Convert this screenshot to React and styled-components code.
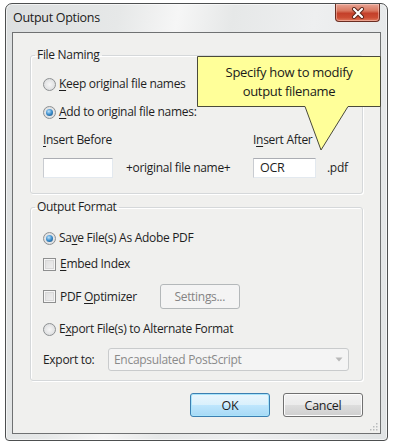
import React from 'react';
import styled, { createGlobalStyle } from 'styled-components';

const GlobalStyle = createGlobalStyle`
  html, body {
    margin: 0;
    padding: 0;
    background: #ffffff;
  }
  body {
    font-family: "Open Sans", "Noto Sans", "DejaVu Sans", sans-serif;
    font-size: 12px;
    letter-spacing: -0.3px;
    color: #1e1e1e;
  }
`;

const Window = styled.div`
  position: relative;
  box-sizing: border-box;
  margin: 3px 0 0 5px;
  width: 383px;
  height: 438px;
  border: 1px solid #4d4f50;
  border-radius: 7px 7px 4px 4px;
  padding: 0 6px 6px 6px;
  display: flex;
  flex-direction: column;
  background: linear-gradient(100deg, #dcdfe0 0%, #e6e8e8 25%, #f6f6f6 38%, #e6e8e8 50%, #eeeff0 68%, #e0e3e4 100%);
  box-shadow: inset 0 0 0 1px rgba(255, 255, 255, 0.6);
`;

const TitleBar = styled.div`
  height: 28px;
  display: flex;
  align-items: flex-start;
  justify-content: space-between;
`;

const Title = styled.span`
  padding: 5px 0 0 1px;
  font-size: 12.5px;
  color: #202020;
`;

const CloseButton = styled.div`
  width: 45px;
  height: 18px;
  margin-right: 1px;
  box-sizing: border-box;
  border: 1px solid #6a2d22;
  border-top: none;
  border-radius: 0 0 4px 4px;
  background: linear-gradient(#e8a495 0%, #d9775f 40%, #c4402a 55%, #cc4d33 80%, #e07a5e 100%);
  display: flex;
  align-items: center;
  justify-content: center;
  box-shadow: inset 0 0 0 1px rgba(255, 220, 210, 0.45);
`;

const Client = styled.div`
  position: relative;
  flex: 1;
  box-sizing: border-box;
  background: #f0f0ee;
  border: 1px solid #6f7172;
  padding: 14px 17px 0 17px;
  display: flex;
  flex-direction: column;
`;

const Group = styled.fieldset`
  min-width: 0;
  margin: ${(p) => p.$top || 0}px 0 0 0;
  padding: ${(p) => p.$pt}px 12px ${(p) => p.$pb}px 12px;
  border: 1px solid #d5d8da;
  border-radius: 3px;
  box-shadow: inset 1px 1px 0 #ffffff, 1px 1px 0 #ffffff;
  display: flex;
  flex-direction: column;
`;

const Legend = styled.legend`
  margin-left: -8px;
  padding: 0 2px;
  line-height: 16px;
  color: #1e1e1e;
`;

const Row = styled.div`
  display: flex;
  align-items: center;
  height: ${(p) => p.$h || 16}px;
  margin-top: ${(p) => p.$mt || 0}px;
  line-height: 16px;
  white-space: nowrap;
`;

const Radio = styled.span`
  box-sizing: border-box;
  width: 13px;
  height: 13px;
  margin-right: 3px;
  border-radius: 50%;
  border: 1px solid #8d9092;
  background: radial-gradient(circle at 50% 50%, #f6f6f6 0%, #e2e3e4 60%, #d2d4d5 100%);
  display: flex;
  align-items: center;
  justify-content: center;
  flex-shrink: 0;

  &::after {
    content: '';
    display: ${(p) => (p.$on ? 'block' : 'none')};
    width: 7px;
    height: 7px;
    border-radius: 50%;
    background: radial-gradient(circle at 40% 35%, #bfe3fa 0%, #3a8ccb 50%, #17466e 100%);
  }
`;

const Check = styled.span`
  box-sizing: border-box;
  width: 13px;
  height: 13px;
  margin-right: 4px;
  border: 1px solid #8e8f8f;
  background: linear-gradient(135deg, #dcdcdc 0%, #f2f2f2 100%);
  box-shadow: inset 0 0 0 1px #f6f6f6, inset 0 0 0 2px #d8d8d8;
  flex-shrink: 0;
`;

const Key = styled.u`
  text-decoration: underline;
  text-underline-offset: 2px;
`;

const FieldGrid = styled.div`
  display: grid;
  grid-template-columns: 70px 140px 63px auto;
  grid-template-rows: 16px 20px;
  row-gap: 10px;
  margin-top: 12px;
  align-items: center;
  line-height: 16px;
  white-space: nowrap;
`;

const TextBox = styled.div`
  box-sizing: border-box;
  height: 20px;
  background: #ffffff;
  border: 1px solid #e3e9ef;
  border-top-color: #abadb3;
  border-left-color: #c9ccd1;
  padding-left: 6px;
  line-height: 18px;
  font-size: 12.5px;
`;

const Caption = styled.span`
  padding-left: ${(p) => p.$pl || 0}px;
`;

const DisabledButton = styled.div`
  box-sizing: border-box;
  width: 80px;
  height: 25px;
  margin-left: 23px;
  border: 1px solid #b4b8ba;
  border-radius: 3px;
  background: #f4f4f4;
  color: #848484;
  display: flex;
  align-items: center;
  justify-content: center;
`;

const FieldLabel = styled.span`
  width: 65px;
  flex-shrink: 0;
`;

const SelectBox = styled.div`
  box-sizing: border-box;
  width: 241px;
  height: 23px;
  border: 1px solid #c9cbcc;
  border-radius: 3px;
  background: #f4f4f4;
  color: #8a8a8a;
  display: flex;
  align-items: center;
  justify-content: space-between;
  padding: 0 5px 0 5px;
`;

const Buttons = styled.div`
  display: flex;
  justify-content: flex-end;
  gap: 13px;
  margin-top: 12px;
`;

const Button = styled.div`
  box-sizing: border-box;
  width: 80px;
  height: 24px;
  border-radius: 3px;
  display: flex;
  align-items: center;
  justify-content: center;
  font-size: 12.5px;
  border: 1px solid ${(p) => (p.$default ? '#3c7fb1' : '#707070')};
  background: ${(p) =>
    p.$default
      ? 'linear-gradient(#eaf6fd 0%, #d9f0fc 50%, #bee6fd 51%, #a7d9f5 100%)'
      : 'linear-gradient(#f2f2f2 0%, #ebebeb 50%, #dddddd 51%, #cfcfcf 100%)'};
  box-shadow: inset 0 0 0 1px ${(p) => (p.$default ? '#a8e4fb' : '#fcfcfc')};
`;

const Callout = styled.div`
  position: absolute;
  left: 191px;
  top: 52px;
  width: 184px;
  height: 95px;
`;

const CalloutText = styled.div`
  position: absolute;
  left: 0;
  top: 0;
  width: 184px;
  height: 51px;
  display: flex;
  flex-direction: column;
  align-items: center;
  justify-content: center;
  font-size: 13px;
  line-height: 19px;
  color: #1a1a1a;
`;

const Grip = styled.svg`
  position: absolute;
  right: 2px;
  bottom: 2px;
`;

function CalloutShape() {
  return (
    <svg width="184" height="95" viewBox="0 0 184 95" style={{ position: 'absolute', left: 0, top: 0 }}>
      <path
        d="M0.5 0.5 H183.5 V50.5 H151 L124 94 L108 50.5 H0.5 Z"
        fill="#ffff99"
        stroke="#4a4a3a"
        strokeWidth="1"
      />
    </svg>
  );
}

export default function App() {
  return (
    <>
      <GlobalStyle />
      <Window>
        <TitleBar>
          <Title>Output Options</Title>
          <CloseButton>
            <svg width="14" height="12" viewBox="0 0 14 12">
              <path d="M3 2 L11 10 M11 2 L3 10" stroke="#5a2418" strokeWidth="4" strokeLinecap="round" />
              <path d="M3 2 L11 10 M11 2 L3 10" stroke="#ffffff" strokeWidth="2.2" strokeLinecap="round" />
            </svg>
          </CloseButton>
        </TitleBar>

        <Client>
          <Group $pt={13} $pb={15}>
            <Legend>File Naming</Legend>
            <Row>
              <Radio />
              <span><Key>K</Key>eep original file names</span>
            </Row>
            <Row $mt={12}>
              <Radio $on />
              <span><Key>A</Key>dd to original file names:</span>
            </Row>
            <FieldGrid>
              <Caption style={{ gridColumn: '1 / 3' }}><Key>I</Key>nsert Before</Caption>
              <Caption style={{ gridColumn: '3 / 5' }}>I<Key>n</Key>sert After</Caption>
              <TextBox />
              <Caption $pl={13}>+original file name+</Caption>
              <TextBox>OCR</TextBox>
              <Caption $pl={11}>.pdf</Caption>
            </FieldGrid>
          </Group>

          <Group $top={5} $pt={15} $pb={9}>
            <Legend>Output Format</Legend>
            <Row>
              <Radio $on />
              <span>Sa<Key>v</Key>e File(s) As Adobe PDF</span>
            </Row>
            <Row $mt={10}>
              <Check />
              <span><Key>E</Key>mbed Index</span>
            </Row>
            <Row $mt={12} $h={25}>
              <Check />
              <span>PDF <Key>O</Key>ptimizer</span>
              <DisabledButton>Settings...</DisabledButton>
            </Row>
            <Row $mt={12}>
              <Radio />
              <span>E<Key>x</Key>port File(s) to Alternate Format</span>
            </Row>
            <Row $mt={11} $h={23}>
              <FieldLabel>Export to:</FieldLabel>
              <SelectBox>
                <span>Encapsulated PostScript</span>
                <svg width="8" height="5" viewBox="0 0 8 5">
                  <path d="M0.5 0.5 H7.5 L4 4.5 Z" fill="#b8b8b8" />
                </svg>
              </SelectBox>
            </Row>
          </Group>

          <Buttons>
            <Button $default>OK</Button>
            <Button>Cancel</Button>
          </Buttons>

          <Grip width="10" height="10" viewBox="0 0 10 10">
            {[[8, 2], [8, 5], [8, 8], [5, 5], [5, 8], [2, 8]].map(([x, y]) => (
              <rect key={`${x}-${y}`} x={x} y={y} width="1.5" height="1.5" fill="#b9bcbd" />
            ))}
          </Grip>
        </Client>

        <Callout>
          <CalloutShape />
          <CalloutText>
            <span>Specify how to modify</span>
            <span>output filename</span>
          </CalloutText>
        </Callout>
      </Window>
    </>
  );
}
